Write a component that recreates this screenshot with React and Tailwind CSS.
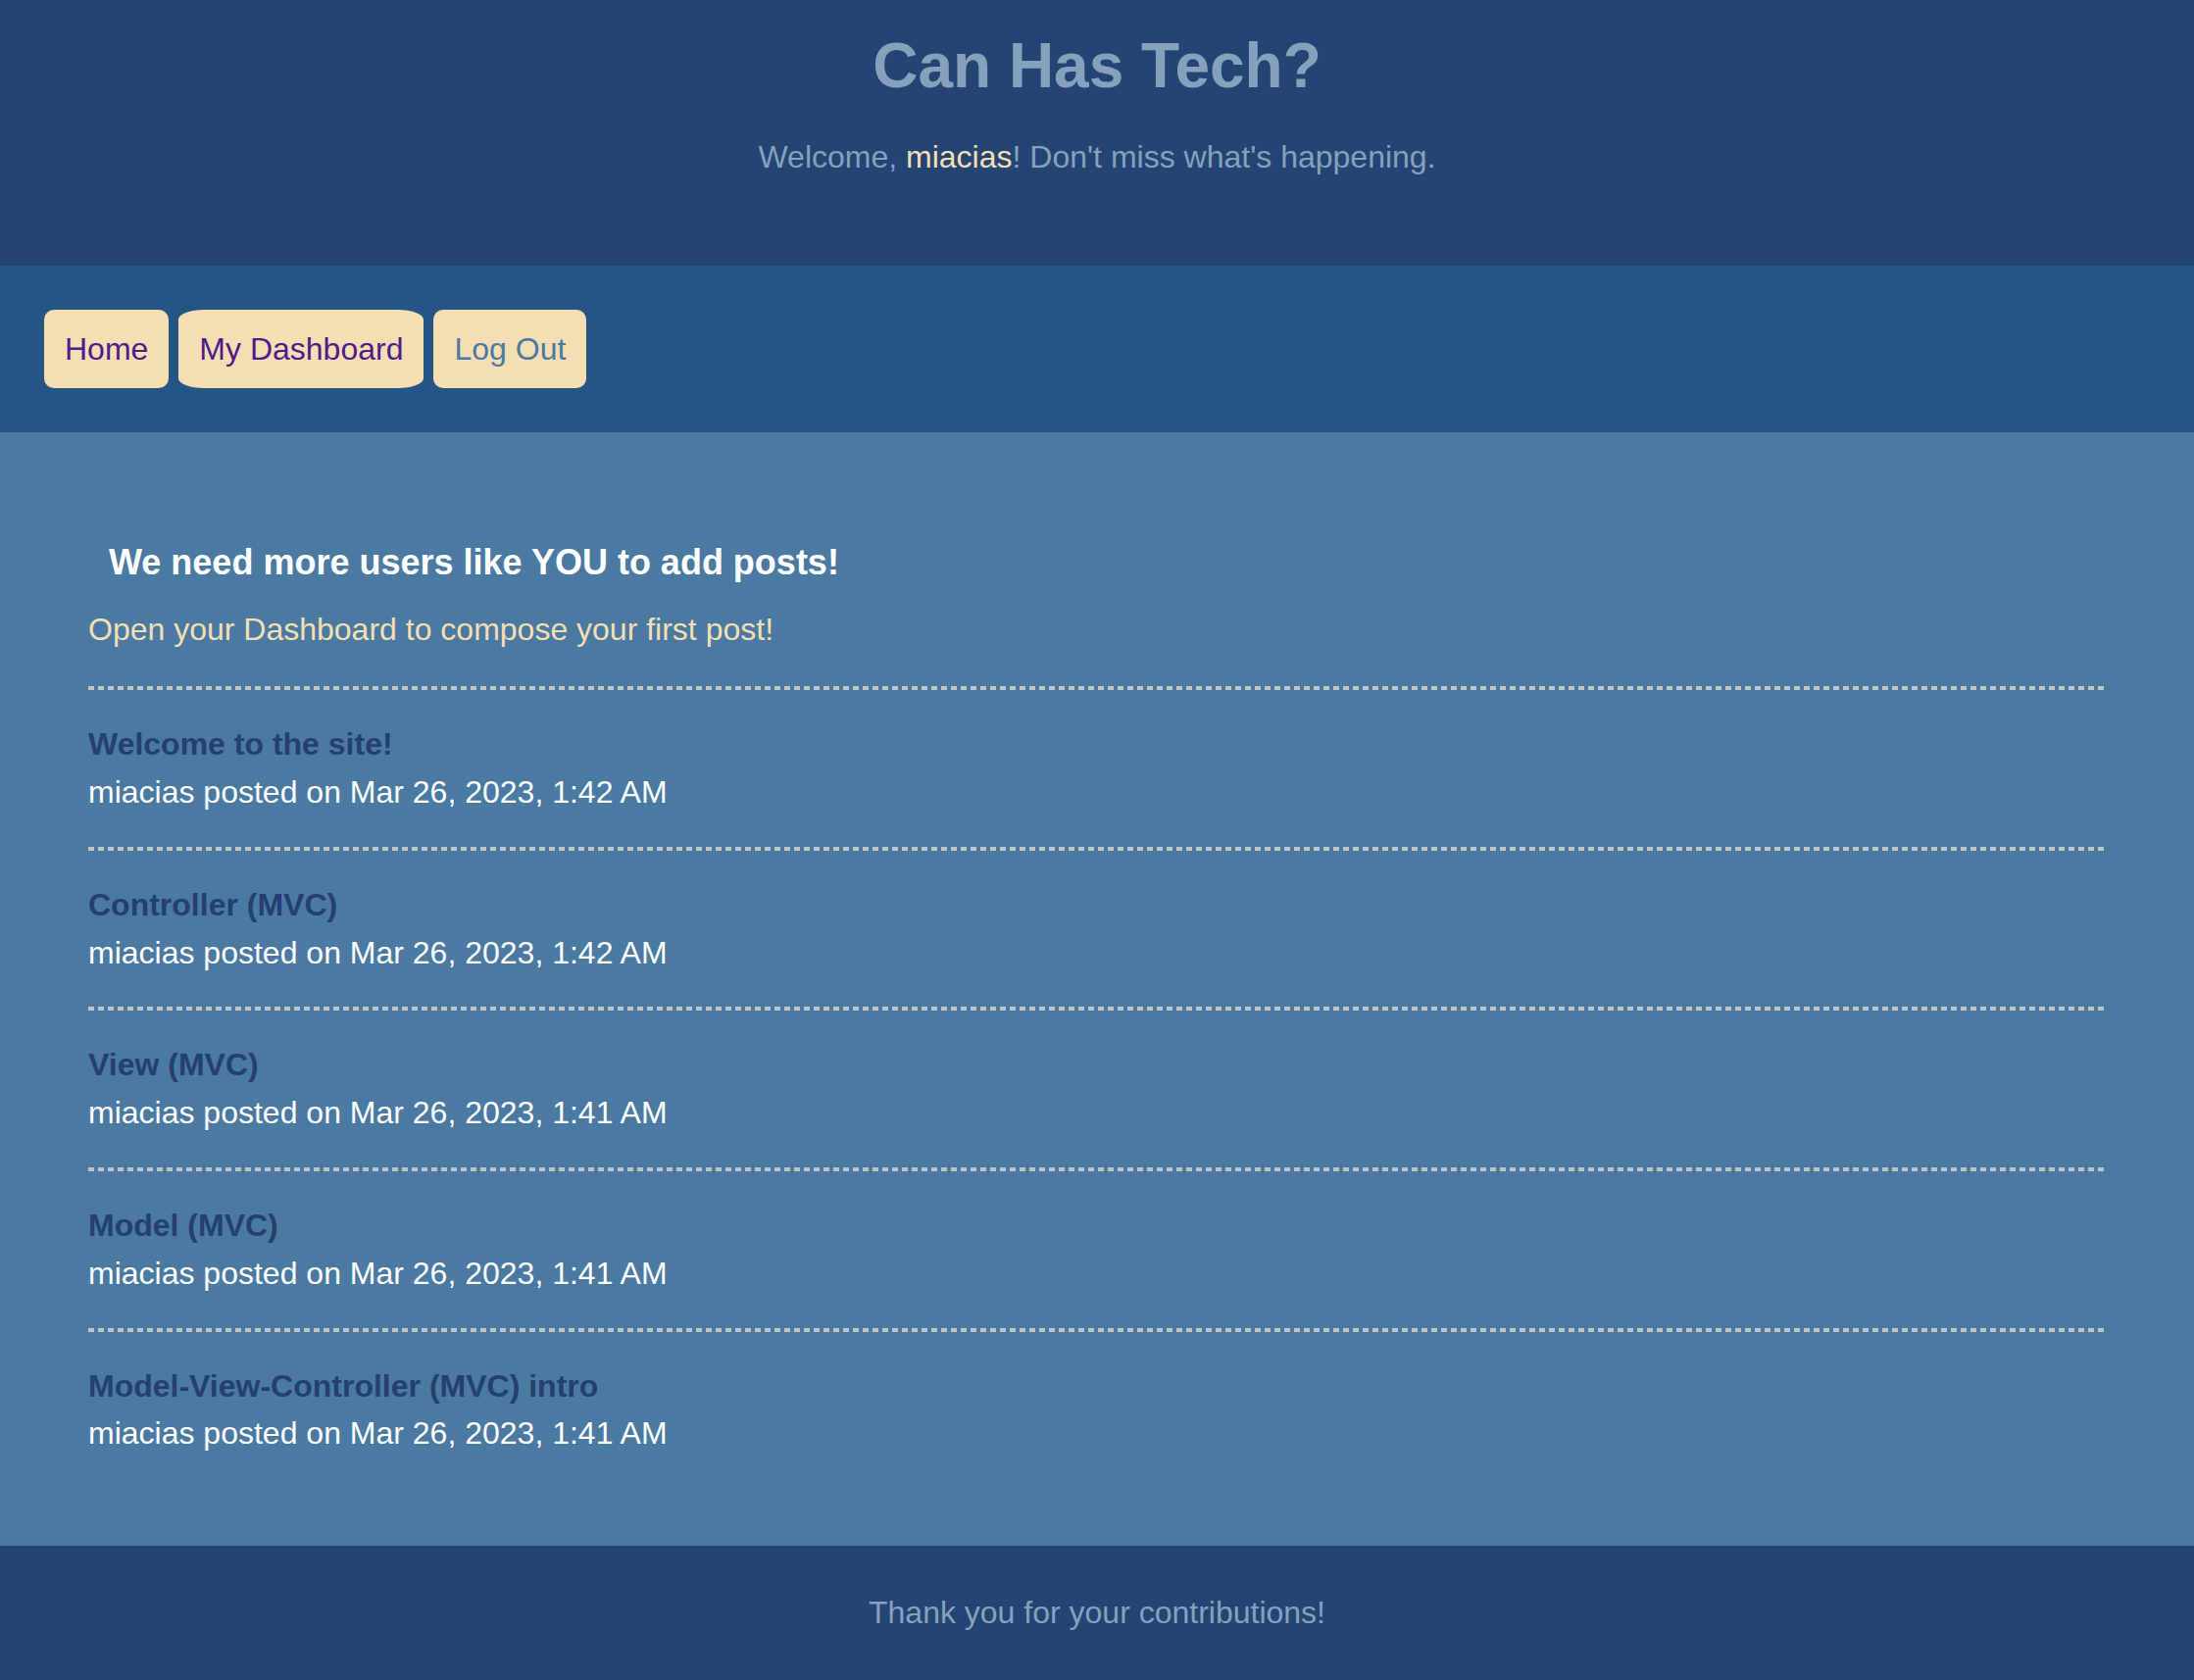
import React from 'react';

const posts = [
  { title: 'Welcome to the site!', date: 'Mar 26, 2023, 1:42 AM' },
  { title: 'Controller (MVC)', date: 'Mar 26, 2023, 1:42 AM' },
  { title: 'View (MVC)', date: 'Mar 26, 2023, 1:41 AM' },
  { title: 'Model (MVC)', date: 'Mar 26, 2023, 1:41 AM' },
  { title: 'Model-View-Controller (MVC) intro', date: 'Mar 26, 2023, 1:41 AM' },
];

const Divider = () => (
  <div className="h-[4px] w-full bg-[repeating-linear-gradient(90deg,#c3c3c3_0_6px,transparent_6px_10px)]"></div>
);

const App = () => {
  return (
    <div className="min-h-screen font-['Liberation_Sans',Arial,sans-serif] leading-[1.15] bg-[#4a7aa2]">
      <header className="h-[271px] bg-[#244474] flex flex-col items-center pt-[31px]">
        <h1 className="text-[64px] font-bold text-[#87a0bb]">Can Has Tech?</h1>
        <p className="mt-[37px] text-[32px] text-[#87a0bb]">
          Welcome, <span className="text-[#f5deb3]">miacias</span>! Don't miss what's happening.
        </p>
      </header>

      <nav className="h-[170px] bg-[#255584] flex gap-[10px] pl-[45px] pt-[45px]">
        <a href="#" className="h-[80px] flex items-center px-[21px] rounded-[10px] bg-[#f5deb3] text-[32px] text-[#4f1a8a]">Home</a>
        <a href="#" className="h-[80px] flex items-center px-[21px] rounded-[26px/10px] bg-[#f5deb3] text-[32px] text-[#4f1a8a]">My Dashboard</a>
        <a href="#" className="h-[80px] flex items-center px-[21px] rounded-[10px] bg-[#f5deb3] text-[32px] text-[#4a7aa2]">Log Out</a>
      </nav>

      <main className="px-[90px] pt-[112px] pb-[59px]">
        <h3 className="pl-[21px] text-[36px] font-bold text-white">We need more users like YOU to add posts!</h3>
        <p className="mt-[30px] mb-[39px] text-[32px] text-[#f5deb3]">Open your Dashboard to compose your first post!</p>
        {posts.map((post, i) => (
          <div key={i}>
            <Divider />
            <div className="pt-[37px] pb-[37px]">
              <h4 className="text-[32px] font-bold text-[#243f70]">{post.title}</h4>
              <p className="mt-[12px] text-[32px] text-white">miacias posted on {post.date}</p>
            </div>
          </div>
        ))}
      </main>

      <footer className="h-[137px] bg-[#244474] flex items-center justify-center">
        <p className="text-[32px] text-[#87a0bb]">Thank you for your contributions!</p>
      </footer>
    </div>
  );
};

export default App;
